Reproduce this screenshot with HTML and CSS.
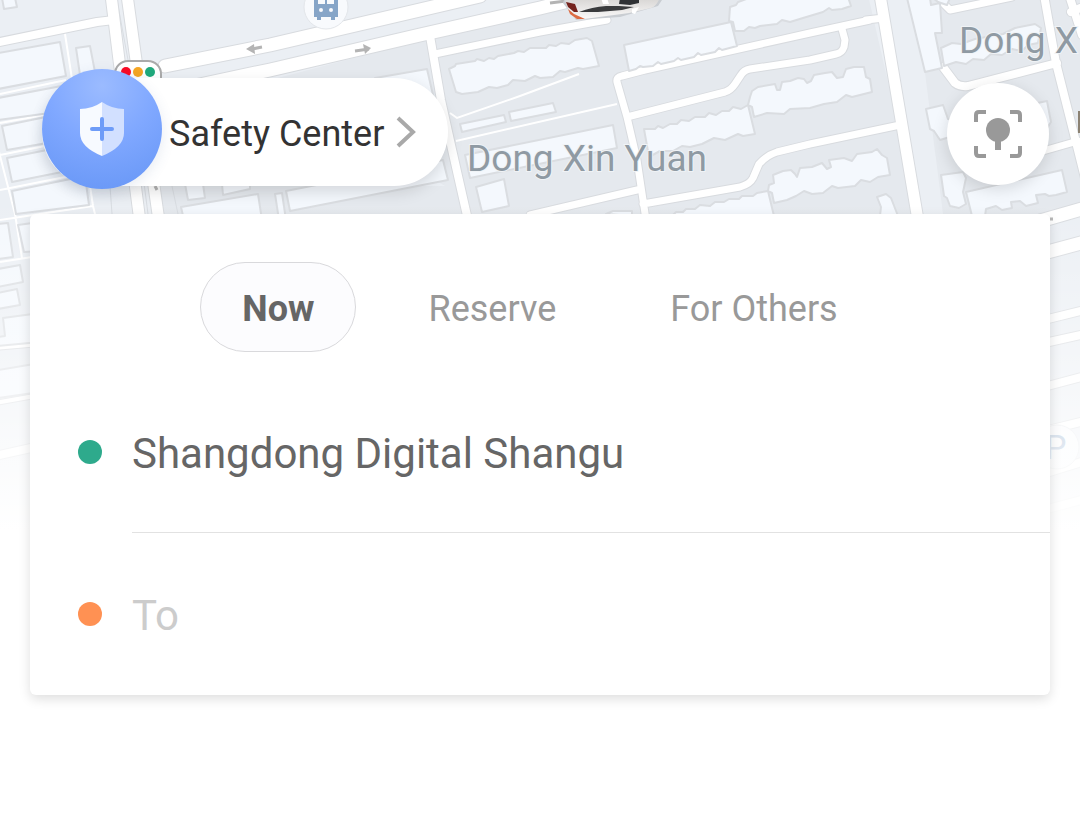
FILE: index.html
```html
<!DOCTYPE html>
<html lang="en">
<head>
<meta charset="utf-8">
<meta name="viewport" content="width=device-width, initial-scale=1">
<title>Book a ride</title>
<link rel="stylesheet" href="styles.css">
</head>
<body>
<svg class="map" viewBox="0 0 1080 540" role="img" aria-label="Map">
  <defs>
    <linearGradient id="fade" x1="0" y1="0" x2="0" y2="1">
      <stop offset="0" stop-color="#fff" stop-opacity="0"/>
      <stop offset="1" stop-color="#fff"/>
    </linearGradient>
    <linearGradient id="carBody" x1="0" y1="0" x2="0" y2="1">
      <stop offset="0" stop-color="#d5d3d1"/>
      <stop offset="1" stop-color="#fbfafa"/>
    </linearGradient>
    <g id="roads">
      <path class="w11" d="M111 -5L119 60L139 214L142 240M127 -5L136 60L158 214L161 240M880 -5L918 220"/>
      <path class="w13" d="M165 66L270 45L480 -4M190 87L270 70L420 35L540 8L610 -9"/>
      <path class="w8" d="M-5 43L97 22L114 20M430 36L441 100L451 145L468 220M943 67L955 83Q960 87 968 86L1057 63M1044 -5L1056 63L1078 150L1088 190M1069 -5L1082 35M1071 12L1085 6"/>
      <path class="w7" d="M435 54L540 32L607 20M870 20L810 33L645 70L622 76Q616 77 617 82L627 117L637 160L646 220M866 20L884 18M627 117L725 92Q731 90 735 84L741 75Q744 70 750 69L810 60L836 54Q842 53 844 47L845 40L842 29M643 204L740 187Q750 184 753 178L759 164Q767 155 777 152L810 144L900 125M530 215L637 190M943 3L950 10L1012 -3M1043 151L1078 141"/>
      <path class="w13" d="M1040 221L1085 208M1040 254L1085 242"/>
      <path class="w8" d="M1040 321L1085 310M1040 344L1085 334M1040 388L1085 376M1040 432L1085 421M1040 475L1085 461M1040 511L1085 499M-5 456L40 446"/>
      <path class="w4" d="M-5 403L40 395M-5 348L40 344"/>
    </g>
  </defs>
  <rect class="land" width="1080" height="540"/>
  <path class="block" d="M270 80L431 38L560 8L620 -5H868L906 160L914 214H160V186H445ZM907 0H1080V214H943L925 73Z"/>
  <path class="edge" d="M117 0L128 60L148 214M110 186L112 214M172 186L178 214"/>
  <use class="casing" href="#roads"/>
  <use class="road" href="#roads"/>
  <path class="lane" d="M0 94L66 80M65 34L72 79M0 123L50 114M0 155L50 145M0 190L80 174M-2 148L15 214L22 258M90 186L93 206L95 214M0 220L93 206M0 262L32 257M450 113L457 118L520 96L579 74M456 141L617 104"/>
  <g class="building">
    <path d="M2 -2H15L17 7L4 9ZM-2 53L60 42L66 76L-2 89ZM76 48L90 46L95 72L80 75ZM-2 98L72 84V110L-2 120ZM2 126L70 112V139L7 150ZM7 158L72 145V170L12 182ZM12 191L85 176L89 205L16 214Z"/>
    <path d="M-2 224L8 223L13 257L-2 259ZM18 225L90 215V248L24 252ZM-2 269L20 265L23 282L-2 287ZM-2 293L17 289L20 305L-2 309ZM-2 337L5 336L3 318L40 313V342L-2 346ZM-2 370L40 363V392L-2 398Z"/>
    <path d="M185 184H203L205 198L188 200ZM222 184H250V189L223 195ZM181 207L258 194L262 220H184ZM275 194L282 193L286 220H279ZM286 191L443 160L448 180L290 211ZM375 78L427 69L433 95L375 105Z"/>
    <path d="M449 69L455 66L456 64L475 61L477 59L484 61L489 58L494 59L498 56L514 53L518 51L524 52L530 48L546 48L549 45L556 46L561 43L569 44L575 40L587 38L592 41L599 66L583 69L578 68L565 72L560 71L553 77L540 78L535 76L525 81L513 80L508 85L497 88L489 87L478 92L462 94L456 92Z"/>
    <path d="M460 124L504 115L506 122L462 132ZM509 112L553 103L556 112L511 121ZM465 155L613 125L617 148L470 178ZM476 187L504 179L509 206L482 212Z"/>
    <path d="M624 45L731 22L737 46L722 50L719 48L715 52L701 55L698 53L694 57L681 60L678 58L674 61L661 64L658 62L653 66L643 67L640 66L636 69L629 71Z"/>
    <path d="M735 31L733 22L729 21L730 7L736 5L738 2L752 -3H848L851 6L842 9L832 10L829 8L823 12L803 18L790 22L782 20L777 24L760 26L755 28L749 27L744 31Z"/>
    <path d="M644 129L655 129L658 126L663 128L670 124L677 124L681 120L689 121L695 117L705 117L709 113L716 115L722 111L729 111L733 107L741 109L748 105L755 134L743 136L738 134L725 140L714 138L702 144L690 147L682 146L673 151L660 151L649 157Z"/>
    <path d="M754 117L752 107L748 105L750 97L752 91L758 87L775 84L777 90L780 90L782 82L790 81L798 78L804 79L807 83L811 81L814 75L825 73L832 72L837 78L843 77L846 69L854 67L864 67L866 77L870 79L872 92L860 95L852 97L846 95L837 102L824 104L810 108L790 109L784 114L767 113Z"/>
    <path d="M672 216L676 212L683 212L686 209L695 209L700 205L710 206L715 202L724 202L729 199L739 199L742 196L753 196L757 193L768 191L774 216ZM606 214L613 211L632 211V216Z"/>
    <path d="M774 203L772 193L768 191L769 185L774 183L773 175L783 171L791 170L795 174L797 177L800 168L812 167L822 163L827 169L831 167L829 160L844 158L852 161L857 154L872 152L877 149L882 155L887 158L890 175L878 177L870 182L861 180L855 186L838 188L832 186L823 193L812 194L804 191L796 196L787 200Z"/>
    <path d="M877 197L886 194L891 198L898 216H880L881 207Z"/>
    <path d="M907 -2H930L931 5L940 3L942 33L935 33L942 68L925 72ZM933 -2H950L947 5L938 2Z"/>
    <path d="M941 48L952 43L961 44L975 39L1003 34L1015 28L1035 24L1041 28L1038 43L1028 45L1022 51L1012 49L1002 55L991 54L984 60L973 59L966 64L956 62L944 66Z"/>
    <path d="M926 109L943 105L948 119L955 120L953 136L940 140L934 131L930 129ZM1028 105L1047 101L1051 122L1046 130L1030 131ZM941 175L963 172L966 178L963 192L966 204L959 208L950 206L947 198L944 196ZM966 192L1062 170L1067 192L1056 195L1049 196L1045 194L1036 195L1038 203L1026 206L1020 201L1011 202L1012 208L1002 210L996 206L986 209L985 216H972Z"/>
  </g>
  <g class="arrow">
    <path d="M262 47L252 49M369 49L355 51"/>
    <path d="M246 49L254 44L255 54ZM371 48L363 44L365 54Z"/>
    <path d="M566 1L550 3M155 186L157 190M1050 219H1053"/>
  </g>
  <circle class="stop" cx="326" cy="7" r="22"/>
  <path class="bus" fill-rule="evenodd" d="M314 -4H338V17H335V20H331V17H321V20H317V17H314ZM318 -3V4H325V-3ZM327 -3V4H334V-3ZM321 8A2 2 0 1 0 321 12A2 2 0 1 0 321 8ZM331 8A2 2 0 1 0 331 12A2 2 0 1 0 331 8Z"/>
  <g class="place">
    <text x="467" y="171">Dong Xin Yuan</text>
    <text x="959" y="53">Dong X</text>
  </g>
  <path class="poi" d="M1078 111H1084V133H1078Z"/>
  <g class="car">
    <path class="car-shadow" d="M563 3L576 20L620 17L658 6L662 0H564Z"/>
    <path fill="url(#carBody)" d="M564 -3L568 9L573 16Q577 20 584 19L629 13L651 8Q657 6 660 -3Z"/>
    <path fill="#74221d" d="M566 2L575 4L578 12L574 12L568 7Z"/>
    <path fill="#dc6b43" d="M568 9L574 14L585 19L577 19L570 14Z"/>
    <path fill="#3a3b3d" d="M579 12Q592 7 606 6H619L634 7L622 10L598 12Z"/>
    <path fill="#303235" d="M620 -2H639V3L630 5L619 4Z"/>
    <path fill="#fff" d="M601 -2H607L609 4L603 4ZM632 9L639 7L635 14L632 13Z"/>
  </g>
  <rect class="signal" x="115" y="61" width="46" height="30" rx="13"/>
  <circle cx="126" cy="72" r="5" fill="#fb0b25"/>
  <circle cx="138" cy="72" r="5" fill="#f5a623"/>
  <circle cx="150" cy="72" r="5" fill="#1fa97c"/>
  <circle class="stop" cx="1057" cy="447" r="22"/>
  <text class="parking" x="1045" y="459">P</text>
  <rect y="200" width="1080" height="330" fill="url(#fade)"/>
  <rect y="530" width="1080" height="10" fill="#fff"/>
</svg>

<main class="page">
  <header class="toolbar">
    <button class="safety" type="button">
      <span class="safety-badge">
        <svg width="46" height="56" viewBox="0 0 46 56" aria-hidden="true">
          <path fill="#f7faff" d="M23 1Q13 8 1 8V32Q1 46 23 55Z"/>
          <path fill="#d2e0ff" d="M23 1Q33 8 45 8V32Q45 46 23 55Z"/>
          <path stroke="#6e9cf8" stroke-width="4" stroke-linecap="round" d="M13 28H33M23 18V38"/>
        </svg>
      </span>
      <span class="safety-label">Safety Center</span>
      <svg class="chevron" width="20" height="32" viewBox="0 0 20 32" aria-hidden="true">
        <path fill="none" stroke="#a9a9a9" stroke-width="4" d="M2 2L17 16L2 30"/>
      </svg>
    </button>
    <button class="locate" type="button" aria-label="My location">
      <svg width="48" height="48" viewBox="0 0 48 48" aria-hidden="true">
        <path fill="none" stroke="#999" stroke-width="4" d="M2 12V5Q2 2 5 2H12M36 2H43Q46 2 46 5V12M46 36V43Q46 46 43 46H36M12 46H5Q2 46 2 43V36"/>
        <circle cx="24" cy="20" r="12" fill="#999"/>
        <path fill="#999" d="M21 28H27V40H21Z"/>
      </svg>
    </button>
  </header>

  <form class="card">
    <div class="tabs">
      <button class="tab tab-active" type="button">Now</button>
      <button class="tab" type="button">Reserve</button>
      <button class="tab" type="button">For Others</button>
    </div>
    <label class="field">
      <span class="dot dot-from"></span>
      <input class="field-input field-line" type="text" aria-label="From" value="Shangdong Digital Shangu">
    </label>
    <label class="field">
      <span class="dot dot-to"></span>
      <input class="field-input" type="text" aria-label="To" placeholder="To">
    </label>
  </form>
</main>
</body>
</html>
```
FILE: styles.css
```css
* {
  box-sizing: border-box;
}

body {
  margin: 0;
  background: #fff;
  font-family: Roboto, "Liberation Sans", sans-serif;
  color: #333;
}

button,
input {
  margin: 0;
  border: 0;
  padding: 0;
  background: none;
  font: inherit;
  color: inherit;
}

/* Map */
.map {
  position: absolute;
  top: 0;
  left: 0;
  z-index: -1;
  display: block;
  width: 100%;
  height: auto;
}

.land { fill: #ebeff4; }
.block { fill: #e5e9ee; }
.edge { fill: none; stroke: #d9dde2; }

.casing,
.road {
  fill: none;
  stroke-linejoin: round;
  stroke-linecap: round;
}

.casing { stroke: #d8dbdf; }
.road { stroke: #fff; }

.casing { --extra: 2px; }
.road { --extra: 0px; }
.w13 { stroke-width: calc(13px + var(--extra)); }
.w11 { stroke-width: calc(11px + var(--extra)); }
.w8 { stroke-width: calc(8px + var(--extra)); }
.w7 { stroke-width: calc(7px + var(--extra)); }
.w4 { stroke-width: calc(4px + var(--extra)); }

.lane {
  fill: none;
  stroke: #fff;
  stroke-width: 2;
}

.building {
  fill: #f4f8fd;
  stroke: #dadde1;
  stroke-width: 2;
  stroke-linejoin: round;
}

.arrow {
  fill: #b4b4b4;
  stroke: #b4b4b4;
  stroke-width: 3;
}

.arrow path:nth-child(2) { stroke: none; }

.stop {
  fill: #f8fafd;
  stroke: #e3e6ea;
}

.bus { fill: #86a5c8; }
.poi { fill: #8c8273; }

.place {
  fill: #8f9aa3;
  stroke: #f0f3f6;
  stroke-width: 2;
  paint-order: stroke;
  font-size: 37px;
}

.car-shadow { fill: #c9cdd2; }

.signal {
  fill: #fff;
  stroke: #aaa;
  stroke-width: 2;
}

.parking {
  fill: #86a5c8;
  font-size: 34px;
}

/* Page */
.page {
  padding: 69px 30px 48px;
}

.toolbar {
  display: flex;
  align-items: flex-start;
  justify-content: space-between;
  height: 145px;
  padding: 9px 1px 0 12px;
}

.safety {
  display: flex;
  align-items: center;
  height: 108px;
  padding-right: 32px;
  border-radius: 54px;
  background: #fff;
  box-shadow: 0 6px 16px rgba(0, 0, 0, 0.13);
}

.safety-badge {
  display: grid;
  place-items: center;
  width: 120px;
  height: 120px;
  margin-top: -6px;
  border-radius: 50%;
  background: radial-gradient(circle at 50% 14%, #9bbbff 0, #80a8ff 45%, #6595f5 100%);
  box-shadow: 0 4px 14px rgba(60, 90, 150, 0.12);
}

.safety-label {
  margin-left: 7px;
  padding-top: 4px;
  font-size: 36px;
  line-height: 42px;
}

.chevron {
  margin-left: 12px;
}

.locate {
  display: grid;
  place-items: center;
  width: 102px;
  height: 102px;
  margin-top: 5px;
  border-radius: 50%;
  background: #fff;
  box-shadow: 0 4px 16px rgba(0, 0, 0, 0.13);
}

.card {
  border-radius: 6px;
  background: #fff;
  box-shadow: 0 4px 12px rgba(0, 0, 0, 0.13);
}

.tabs {
  display: flex;
  justify-content: center;
  gap: 30px;
  padding: 48px 0 19px;
}

.tab {
  height: 90px;
  padding: 4px 41px 0;
  border: 1px solid transparent;
  border-radius: 45px;
  font-size: 36px;
  color: #999;
}

.tab-active {
  border-color: #d9d9dc;
  background: #fcfcfe;
  font-weight: 700;
  color: #666;
}

.field {
  display: flex;
  align-items: center;
  gap: 30px;
  padding-left: 48px;
}

.dot {
  flex: none;
  width: 24px;
  height: 24px;
  border-radius: 50%;
}

.dot-from { background: #2eaa8c; }
.dot-to { background: #ff9153; }

.field-input {
  flex: 1;
  min-width: 0;
  height: 162px;
  padding-top: 3px;
  border-bottom: 1px solid transparent;
  outline: 0;
  font-size: 42px;
  color: #666;
}

.field-line { border-color: #e2e2e2; }

.field-input::placeholder {
  color: #ccc;
  opacity: 1;
}
```
